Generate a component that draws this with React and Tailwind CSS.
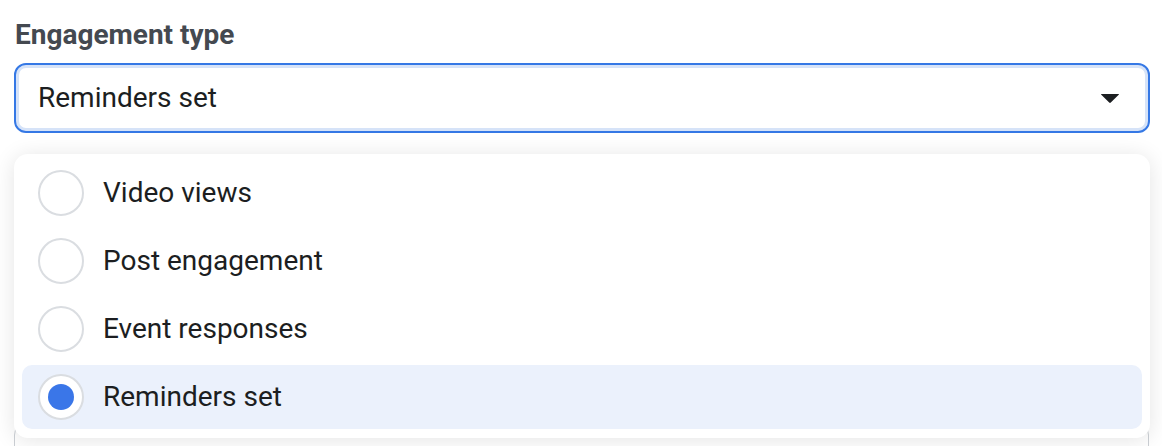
const options = ['Video views', 'Post engagement', 'Event responses', 'Reminders set'];

function Radio({ checked }) {
  return (
    <span className="w-[46px] h-[46px] rounded-full border-2 border-[#dadde1] bg-white flex items-center justify-center shrink-0">
      {checked && <span className="w-[26px] h-[26px] rounded-full bg-[#3a76e8]" />}
    </span>
  );
}

export default function App() {
  const selected = 'Reminders set';

  return (
    <div
      className="relative h-[446px] overflow-hidden bg-white px-[14px] pt-[18px]"
      style={{ fontFamily: 'Roboto, "Liberation Sans", Arial, sans-serif' }}
    >
      <label className="block text-[28px] leading-[33px] font-bold text-[#444950] pl-[1px]">Engagement type</label>

      {/* Select field */}
      <div className="mt-[12px] h-[70px] w-[1136px] rounded-[12px] border-2 border-[#3578e5] shadow-[inset_0_0_0_3px_#d6e3f8] flex items-center justify-between pl-[22px] pr-[28px]">
        <span className="text-[28px] text-[#1c1e21]">Reminders set</span>
        <svg width="20" height="11" viewBox="0 0 20 11">
          <path d="M1.5 1 H18.5 Q19.5 1 18.7 1.8 L10.8 9.6 Q10 10.4 9.2 9.6 L1.3 1.8 Q0.5 1 1.5 1 Z" fill="#1c1e21" />
        </svg>
      </div>

      {/* Field beneath the menu */}
      <div className="mt-[290px] h-[70px] w-[1135px] rounded-[12px] border border-[#ccd0d5] bg-white" />

      {/* Dropdown menu */}
      <div className="absolute left-[14px] top-[154px] w-[1136px] rounded-[14px] bg-white p-[8px] pt-[7px] pb-[9px] shadow-[0_2px_22px_rgba(0,0,0,0.11)] flex flex-col gap-[4px]">
        {options.map((opt) => (
          <div
            key={opt}
            className={`h-[64px] rounded-[10px] flex items-center pl-[16px] gap-[19px] ${opt === selected ? 'bg-[#ebf1fc]' : ''}`}
          >
            <Radio checked={opt === selected} />
            <span className="text-[28px] text-[#1c1e21]">{opt}</span>
          </div>
        ))}
      </div>
    </div>
  );
}
